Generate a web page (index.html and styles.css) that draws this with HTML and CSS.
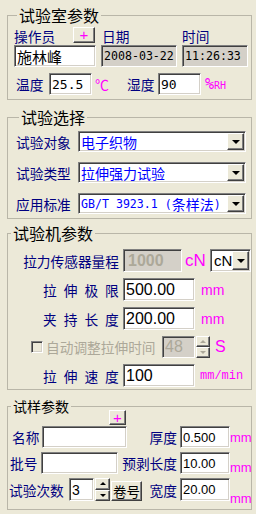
FILE: index.html
```html
<!DOCTYPE html>
<html lang="zh-CN">
<head>
    <meta charset="UTF-8">
    <meta name="viewport" content="width=device-width, initial-scale=1.0">
    <title>试验参数</title>
    <link rel="stylesheet" href="styles.css">
</head>
<body>
    <fieldset class="group lab">
        <legend>试验室参数</legend>
        <div class="lab-grid">
            <div class="op-head">
                <span>操作员</span>
                <button class="btn plus" type="button">+</button>
            </div>
            <span class="date-lbl">日期</span>
            <span>时间</span>
            <input class="field name" type="text" value="施林峰">
            <input class="field readonly clock" type="text" value="2008-03-22" readonly>
            <input class="field readonly clock" type="text" value="11:26:33" readonly>
        </div>
        <div class="env-row">
            <span class="env-lbl">温度</span>
            <input class="field env" type="text" value="25.5">
            <span class="unit deg">℃</span>
            <span class="env-lbl hum">湿度</span>
            <input class="field env" type="text" value="90">
            <span class="unit rh"><span class="pct">%</span>RH</span>
        </div>
    </fieldset>

    <fieldset class="group choice">
        <legend>试验选择</legend>
        <div class="sel-row">
            <span class="sel-lbl">试验对象</span>
            <div class="combo wide">
                <span class="combo-text">电子织物</span>
                <span class="drop"><i class="arrow"></i></span>
            </div>
        </div>
        <div class="sel-row">
            <span class="sel-lbl">试验类型</span>
            <div class="combo wide">
                <span class="combo-text">拉伸强力试验</span>
                <span class="drop"><i class="arrow"></i></span>
            </div>
        </div>
        <div class="sel-row">
            <span class="sel-lbl">应用标准</span>
            <div class="combo wide">
                <span class="combo-text"><span class="half">GB/T 3923.1 (</span>条样法<span class="half">)</span></span>
                <span class="drop"><i class="arrow"></i></span>
            </div>
        </div>
    </fieldset>

    <fieldset class="group machine">
        <legend>试验机参数</legend>
        <div class="m-row">
            <span class="m-lbl">拉力传感器量程</span>
            <input class="field m-input range" type="text" value="1000" disabled>
            <span class="unit cn">cN</span>
            <div class="combo small">
                <span class="combo-text">cN</span>
                <span class="drop"><i class="arrow"></i></span>
            </div>
        </div>
        <div class="m-row">
            <span class="m-lbl spread">拉伸极限</span>
            <input class="field m-input" type="text" value="500.00">
            <span class="unit mm">mm</span>
        </div>
        <div class="m-row">
            <span class="m-lbl spread">夹持长度</span>
            <input class="field m-input" type="text" value="200.00">
            <span class="unit mm">mm</span>
        </div>
        <div class="m-row auto">
            <input class="check" type="checkbox" disabled>
            <span class="auto-lbl">自动调整拉伸时间</span>
            <input class="field m-input secs" type="text" value="48" disabled>
            <span class="spin off">
                <span class="spin-btn"><i class="tri up"></i></span>
                <span class="spin-btn"><i class="tri down"></i></span>
            </span>
            <span class="unit sec">S</span>
        </div>
        <div class="m-row last">
            <span class="m-lbl spread">拉伸速度</span>
            <input class="field m-input" type="text" value="100">
            <span class="unit speed">mm/min</span>
        </div>
    </fieldset>

    <fieldset class="group sample">
        <legend>试样参数</legend>
        <div class="plus-row">
            <button class="btn plus mini" type="button">+</button>
        </div>
        <div class="s-row first">
            <span class="s-lbl name-lbl">名称</span>
            <input class="field s-name" type="text" value="">
            <div class="rpart">
                <span>厚度</span>
                <input class="field s-val" type="text" value="0.500">
                <span class="unit s-mm">mm</span>
            </div>
        </div>
        <div class="s-row">
            <span class="s-lbl batch-lbl">批号</span>
            <input class="field s-batch" type="text" value="">
            <div class="rpart">
                <span>预剥长度</span>
                <input class="field s-val" type="text" value="10.00">
                <span class="unit s-mm low">mm</span>
            </div>
        </div>
        <div class="s-row last">
            <span class="s-lbl count-lbl">试验次数</span>
            <input class="field s-count" type="text" value="3">
            <span class="spin">
                <span class="spin-btn"><i class="tri up"></i></span>
                <span class="spin-btn"><i class="tri down"></i></span>
            </span>
            <button class="btn roll" type="button">卷号</button>
            <div class="rpart">
                <span>宽度</span>
                <input class="field s-val" type="text" value="20.00">
                <span class="unit s-mm lower">mm</span>
            </div>
        </div>
    </fieldset>
</body>
</html>
```

FILE: styles.css
```css
* {
    box-sizing: border-box;
    margin: 0;
    padding: 0;
}

body {
    width: 256px;
    background-color: #ece9d8;
    font-family: "Noto Sans CJK SC", sans-serif;
    font-size: 13.7px;
    color: #000080;
}

/* group boxes */
.group {
    width: 245px;
    margin-left: 7px;
    border: 1px solid #b9b6a8;
    min-width: 0;
}

.group legend {
    margin-left: 3px;
    padding: 0 2px;
    font-size: 16px;
    line-height: 20px;
    color: #000;
}

.lab {
    margin-top: 5px;
    padding: 0 0 4px 6px;
}

.choice {
    margin-top: 7px;
    padding: 0 0 4px 8px;
}

.machine {
    margin-top: 4px;
    padding: 0 0 2px 0;
}

.sample {
    margin-top: 8px;
    padding: 0 0 8px 0;
}

.sample legend {
    font-size: 14px;
    line-height: 16px;
}

/* common controls */
.field {
    display: block;
    border: 1px solid;
    border-color: #808080 #fff #fff #808080;
    box-shadow: inset 1px 1px #404040, inset -1px -1px #d4d0c8;
    background-color: #fff;
    color: #000;
    padding-left: 2px;
    outline: none;
    font-family: "Liberation Sans", sans-serif;
}

.field.readonly,
.field:disabled {
    background-color: #d4d0c8;
}

.field:disabled {
    color: #aca899;
}

.btn {
    border: 1px solid;
    border-color: #fff #404040 #404040 #fff;
    box-shadow: inset -1px -1px #808080;
    background-color: #ece9d8;
    font-family: "Noto Sans CJK SC", sans-serif;
}

.plus {
    color: #ff00ff;
    font-family: "Liberation Sans", sans-serif;
    font-size: 15px;
    line-height: 14px;
}

.unit {
    color: #ff00ff;
    font-family: "Liberation Sans", sans-serif;
    white-space: nowrap;
}

.combo {
    display: flex;
    align-items: stretch;
    height: 21px;
    padding: 1px;
    border: 1px solid;
    border-color: #808080 #fff #fff #808080;
    box-shadow: inset 1px 1px #404040, inset -1px -1px #d4d0c8;
    background-color: #fff;
}

.combo-text {
    flex: 1;
    display: flex;
    align-items: center;
    padding-left: 1px;
    font-size: 14px;
    white-space: nowrap;
}

.drop {
    width: 17px;
    display: flex;
    align-items: center;
    justify-content: center;
    border: 1px solid;
    border-color: #fff #404040 #404040 #fff;
    box-shadow: inset -1px -1px #808080;
    background-color: #ece9d8;
}

.arrow {
    border-left: 4px solid transparent;
    border-right: 4px solid transparent;
    border-top: 4px solid #000;
}

.spin {
    display: flex;
    flex-direction: column;
}

.spin-btn {
    flex: 1;
    display: flex;
    align-items: center;
    justify-content: center;
    border: 1px solid;
    border-color: #fff #404040 #404040 #fff;
    box-shadow: inset -1px -1px #808080;
    background-color: #ece9d8;
}

.tri {
    border-left: 3px solid transparent;
    border-right: 3px solid transparent;
}

.tri.up {
    border-bottom: 3px solid #000;
}

.tri.down {
    border-top: 3px solid #000;
}

.spin.off .tri.up {
    border-bottom-color: #aca899;
}

.spin.off .tri.down {
    border-top-color: #aca899;
}

/* lab parameters */
.lab-grid {
    display: grid;
    grid-template-columns: 82px 76px 66px;
    grid-template-rows: 18px 22px;
    column-gap: 5px;
    margin-top: 2px;
    line-height: 18px;
}

.op-head {
    display: flex;
    justify-content: space-between;
    align-items: flex-start;
}

.op-head .plus {
    width: 22px;
    height: 16px;
    margin-right: 1px;
}

.date-lbl {
    padding-left: 1px;
}

.field.name {
    height: 22px;
    font-family: "Noto Sans CJK SC", sans-serif;
    font-size: 15px;
}

.field.clock {
    height: 22px;
    font-family: "DejaVu Sans Mono", monospace;
    font-size: 11.6px;
}

.env-row {
    display: flex;
    align-items: center;
    height: 22px;
    margin-top: 6px;
}

.env-lbl {
    width: 28px;
    margin-left: 2px;
}

.env-lbl.hum {
    margin-left: 18px;
}

.field.env {
    width: 43px;
    height: 22px;
    margin-left: 5px;
    font-family: "DejaVu Sans Mono", monospace;
    font-size: 13px;
}

.hum + .field.env {
    margin-left: 3px;
}

.deg {
    width: 14px;
    margin-left: 3px;
    font-family: "Noto Sans CJK SC", sans-serif;
    font-size: 14px;
}

.rh {
    margin-left: 4px;
    font-family: "DejaVu Sans Mono", monospace;
    font-size: 10px;
}

.rh .pct {
    font-size: 15px;
}

/* test selection */
.sel-row {
    display: flex;
    align-items: center;
    margin-top: 10px;
}

.sel-row:first-of-type {
    margin-top: 4px;
}

.sel-lbl {
    width: 56px;
}

.combo.wide {
    width: 168px;
    margin-left: 6px;
    color: #0000ff;
}

.half {
    font-family: "DejaVu Sans Mono", monospace;
    font-size: 11.6px;
    white-space: pre;
}

/* machine parameters */
.m-row {
    display: flex;
    align-items: center;
    height: 23px;
    margin-top: 6px;
}

.m-row.auto {
    height: 22px;
}

.m-lbl {
    width: 96px;
    margin-left: 15px;
    text-align: right;
    white-space: nowrap;
}

.m-lbl.spread {
    padding-left: 20px;
    text-align: left;
    letter-spacing: 7px;
}

.field.m-input {
    width: 72px;
    height: 23px;
    margin-left: 4px;
    font-size: 16px;
}

.field.range {
    width: 59px;
    padding-left: 4px;
    font-weight: bold;
}

.cn {
    margin-left: 3px;
    font-size: 17px;
}

.combo.small {
    width: 41px;
    height: 23px;
    margin-left: auto;
    color: #000;
}

.combo.small .combo-text {
    padding-left: 2px;
    font-family: "Liberation Sans", sans-serif;
    font-size: 15px;
}

.mm {
    margin-left: 6px;
    font-size: 14px;
}

.check {
    appearance: none;
    width: 12px;
    height: 12px;
    margin-left: 23px;
    border: 1px solid;
    border-color: #808080 #fff #fff #808080;
    box-shadow: inset 1px 1px #404040, inset -1px -1px #d4d0c8;
    background-color: #ece9d8;
}

.auto-lbl {
    width: 113px;
    margin-left: 3px;
    color: #aca899;
    white-space: nowrap;
}

.field.secs {
    width: 33px;
    height: 22px;
    margin-left: 3px;
}

.m-row .spin {
    width: 14px;
    height: 22px;
    margin-left: 1px;
}

.sec {
    margin-left: 5px;
    font-size: 16px;
}

.speed {
    margin-left: 5px;
    font-family: "Liberation Mono", monospace;
    font-size: 12px;
}

/* sample parameters */
.plus-row {
    height: 15px;
    margin-top: -4px;
    padding-left: 101px;
}

.plus.mini {
    display: block;
    width: 17px;
    height: 15px;
    line-height: 13px;
}

.s-row {
    display: flex;
    align-items: center;
    height: 22px;
    margin-top: 4px;
}

.s-row.first {
    margin-top: 1px;
}

.s-row.last {
    height: 23px;
}

.name-lbl {
    width: 28px;
    margin-left: 4px;
}

.field.s-name {
    width: 85px;
    height: 22px;
    margin-left: 2px;
}

.batch-lbl {
    width: 28px;
    margin-left: 2px;
}

.field.s-batch {
    width: 77px;
    height: 22px;
    margin-left: 3px;
}

.count-lbl {
    width: 55px;
    margin-left: 1px;
}

.field.s-count {
    width: 25px;
    height: 23px;
    margin-left: 5px;
    font-size: 14px;
}

.s-row .spin {
    width: 15px;
    height: 23px;
    margin-left: 1px;
}

.roll {
    width: 31px;
    height: 20px;
    margin-left: 1px;
    margin-top: 3px;
    color: #000;
    font-size: 13.5px;
    line-height: 16px;
}

.rpart {
    display: flex;
    align-items: center;
    margin-left: auto;
}

.field.s-val {
    width: 50px;
    height: 22px;
    margin-left: 3px;
    font-size: 13px;
}

.s-row.last .field.s-val {
    height: 23px;
}

.s-mm {
    width: 21px;
    font-size: 13px;
    line-height: 15px;
}

.s-mm.low {
    margin-top: 8px;
}

.s-mm.lower {
    margin-top: 18px;
}
```
